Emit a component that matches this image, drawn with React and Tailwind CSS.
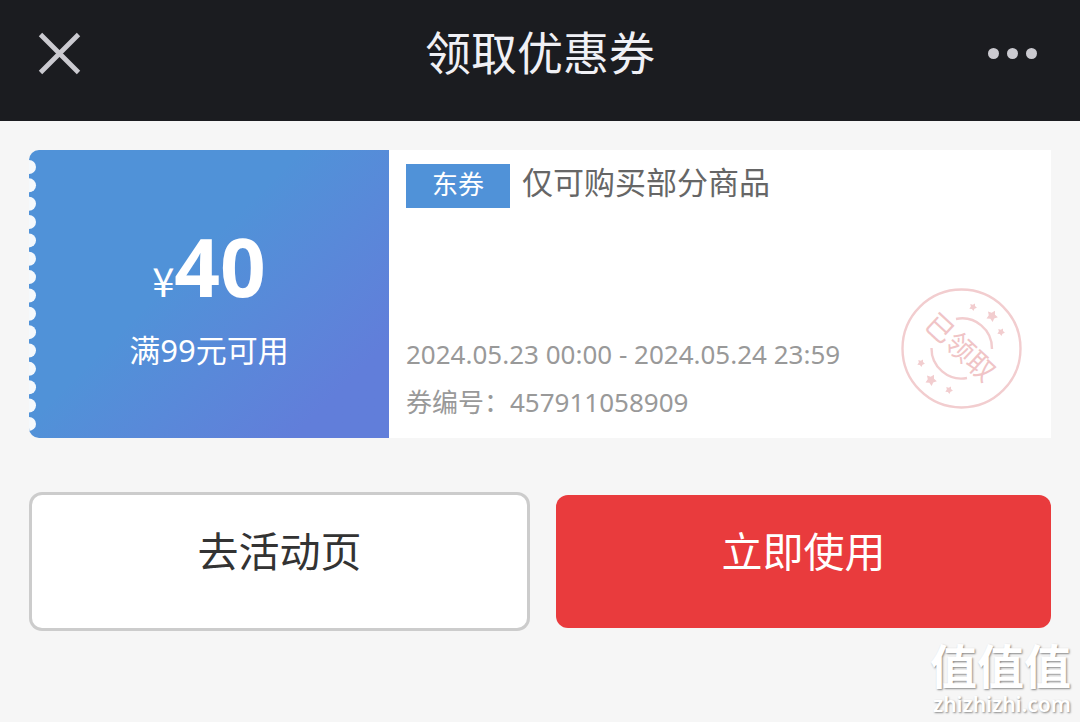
import React from 'react';

const FONT = "font-['Noto_Sans','Noto_Sans_CJK_SC',sans-serif]";

// Centres of the round notches along the left edge of the coupon
const notches = Array.from({ length: 15 }, (_, i) => 17 + i * 18.35);

const stars = [
    { x: 72, y: 19, r: 4 },
    { x: 91, y: 28, r: 6 },
    { x: 100, y: 44, r: 4 },
    { x: 20, y: 75, r: 4 },
    { x: 30, y: 92, r: 6 },
    { x: 48, y: 102, r: 4 },
];

const starPoints = ({ x, y, r }) =>
    Array.from({ length: 10 }, (_, i) => {
        const radius = i % 2 ? r * 0.55 : r;
        const angle = (i * Math.PI) / 5 - Math.PI / 3;
        return `${x + radius * Math.cos(angle)},${y + radius * Math.sin(angle)}`;
    }).join(' ');

const Header = () => (
    <header className="flex h-[121px] items-center justify-between bg-[#1b1c20] pr-[43px] pb-3.5 pl-[38px]">
        <button type="button" aria-label="关闭" className="w-[54px]">
            <svg viewBox="0 0 43 43" className="size-[43px]" fill="none" stroke="#cbcad0" strokeWidth="4.8">
                <path d="M2.500 2.500 40.500 40.500M40.500 2.500 2.500 40.500" />
            </svg>
        </button>
        <h1 className="pb-1 text-[46px] leading-[56px] text-[#f0f0f5]">领取优惠券</h1>
        <button type="button" aria-label="更多" className="flex w-[49px] justify-between">
            <span className="size-[11px] rounded-full bg-[#cbcad0]" />
            <span className="size-[11px] rounded-full bg-[#cbcad0]" />
            <span className="size-[11px] rounded-full bg-[#cbcad0]" />
        </button>
    </header>
);

const ReceivedStamp = () => (
    <svg viewBox="0 0 121 121" className="size-[121px] shrink-0" fill="none" stroke="#f2cdcf" strokeWidth="2.4">
        <circle cx="60.5" cy="60.5" r="59" />
        <path d="M55 31A30 30 0 0 1 91 61" />
        <path d="M30.500 60A30 30 0 0 0 66 90" />
        {stars.map((star) => (
            <polygon key={`${star.x}-${star.y}`} points={starPoints(star)} fill="#f2cdcf" stroke="none" />
        ))}
        <text
            x="59"
            y="70"
            transform="rotate(43 60 60)"
            textAnchor="middle"
            fill="#f0c4c6"
            stroke="none"
            className="text-[28px]"
        >
            已领取
        </text>
    </svg>
);

const CouponAmount = () => (
    <div className="relative flex w-[360px] shrink-0 flex-col items-center overflow-hidden rounded-l-[10px] bg-linear-135 from-[#5092d8] from-42% to-[#617eda] to-85% pt-[76px] text-white">
        <svg className="absolute top-0 left-0 h-full w-2" fill="#f5f9fc">
            {notches.map((cy) => (
                <circle key={cy} cx="0" cy={cy} r="7" />
            ))}
        </svg>
        <p className="flex items-baseline leading-[80px]">
            <span className="font-['Noto_Sans_CJK_SC'] text-[40px]">¥</span>
            <strong className="text-[80px] font-bold">40</strong>
        </p>
        <p className="mt-2 text-[31px] leading-[44px]">满99元可用</p>
    </div>
);

const Coupon = () => (
    <section className="flex h-72">
        <CouponAmount />
        <div className="flex flex-1 flex-col justify-between bg-white pt-3.5 pr-[29px] pb-3 pl-[17px]">
            <div className="flex items-start gap-3">
                <span className="flex h-11 w-[104px] items-center justify-center bg-[#5092d8] pb-1 text-[26px] text-white">
                    东券
                </span>
                <h2 className="text-[31px] leading-9 text-[#666]">仅可购买部分商品</h2>
            </div>
            <div className="flex items-end justify-between">
                <div className="text-[26px] leading-[48px] text-[#999]">
                    <p>2024.05.23 00:00 - 2024.05.24 23:59</p>
                    <p>券编号：457911058909</p>
                </div>
                <div className="pb-[17px]">
                    <ReceivedStamp />
                </div>
            </div>
        </div>
    </section>
);

const Actions = () => (
    <div className="mt-[57px] grid grid-cols-2 gap-[29px] pl-[3px] text-[41px] leading-[60px]">
        <button type="button" className="h-[133px] rounded-[10px] bg-white pb-[22px] text-[#333] ring-3 ring-[#ccc]">
            去活动页
        </button>
        <button type="button" className="h-[133px] rounded-xl bg-[#e93b3d] pb-[22px] text-white">
            立即使用
        </button>
    </div>
);

const Watermark = () => (
    <footer className="mt-2.5 -mr-5 flex flex-col items-end text-white [text-shadow:1px_1px_2px_#888]">
        <p className="font-['Noto_Sans_CJK_SC'] text-[47px] leading-[52px] font-bold">值值值</p>
        <p className="text-[21px] leading-7 font-semibold">zhizhizhi.com</p>
    </footer>
);

const App = () => (
    <div className={`min-h-screen bg-[#f6f6f6] ${FONT}`}>
        <Header />
        <main className="px-[29px] pt-[29px]">
            <Coupon />
            <Actions />
            <Watermark />
        </main>
    </div>
);

export default App;
